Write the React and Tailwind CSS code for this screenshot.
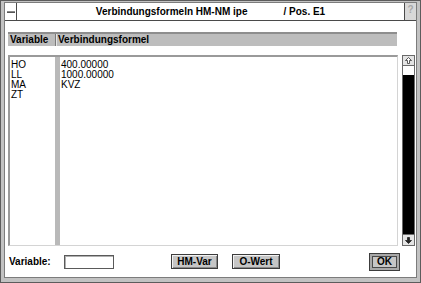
import React from 'react';

const rows = [
  ['HO', '400.00000'],
  ['LL', '1000.00000'],
  ['MA', 'KVZ'],
  ['ZT', ''],
];

const Btn = ({ children, className = '' }) => (
  <div
    className={`h-[15px] flex items-center justify-center bg-[#c6c6c6] border border-[#3c3c3c] shadow-[inset_1px_1px_0_#f2f2f2,inset_-1px_-1px_0_#8a8a8a] text-[10px] font-bold leading-none ${className}`}
  >
    {children}
  </div>
);

export default function App() {
  return (
    <div className="w-[421px] h-[283px] bg-[#5c5c5c] p-px font-['Liberation_Sans',Arial,sans-serif] text-black">
      <div className="h-full bg-[#c2c2c2] pt-px px-[3px] pb-[4px] flex">
        <div className="flex-1 border border-[#7c7c7c] bg-white flex flex-col">
          {/* Title bar */}
          <div className="h-[18px] flex border-b border-[#4a4a4a]">
            <div className="w-[12px] border-r border-[#4a4a4a] flex items-center justify-center">
              <div className="w-[8px] h-[2px] bg-[#8a8a8a] border-b border-[#555]" />
            </div>
            <div className="flex-1 text-center text-[10px] font-bold leading-[18px] whitespace-pre">
              Verbindungsformeln HM-NM ipe<span className="ml-[36px]">/ Pos. E1</span>
            </div>
            <div className="w-[12px] border-l border-[#4a4a4a] bg-[#d8d8d8] flex items-start justify-center text-[10px] leading-[14px] font-bold text-[#a8a8a8]">
              ?
            </div>
          </div>

          {/* Body */}
          <div className="flex-1 flex flex-col pl-[3px] pr-[1px]">
            {/* Header */}
            <div className="mt-[11px] mr-[18px] h-[14px] bg-[#bdbdbd] border-t-2 border-[#8e8e8e] flex text-[10px] font-bold leading-[12px]">
              <div className="w-[47px] pl-[2px]">Variable</div>
              <div className="w-px bg-[#7a7a7a]" />
              <div className="w-px bg-[#e6e6e6]" />
              <div className="pl-px">Verbindungsformel</div>
            </div>

            {/* List + scrollbar */}
            <div className="mt-[9px] h-[191px] flex">
              <div className="flex-1 flex border-t-2 border-l-2 border-[#9a9a9a] border-r border-b border-r-[#d4d4d4] border-b-[#d4d4d4]">
                <div className="w-[45px] pt-[3px] text-[10px] leading-[10px] pl-px">
                  {rows.map(([k]) => (
                    <div key={k}>{k}</div>
                  ))}
                </div>
                <div className="w-[5px] bg-[#b9b9b9]" />
                <div className="flex-1 pt-[3px] pl-px text-[10px] leading-[10px]">
                  {rows.map(([k, v]) => (
                    <div key={k} className="h-[10px]">{v}</div>
                  ))}
                </div>
              </div>

              {/* Scrollbar */}
              <div className="ml-[4px] w-[13px] flex flex-col border border-[#6a6a6a]">
                <div className="h-[10px] bg-[#e4e4e4] border-b border-[#6a6a6a] flex items-center justify-center">
                  <svg width="7" height="7" viewBox="0 0 7 7">
                    <path d="M3.5 0.5 L6.5 3.5 L4.5 3.5 L4.5 6.5 L2.5 6.5 L2.5 3.5 L0.5 3.5 Z" fill="#fff" stroke="#333" strokeWidth="0.8" />
                  </svg>
                </div>
                <div className="h-[11px] bg-white border-b-2 border-black" />
                <div className="flex-1 bg-black" />
                <div className="h-[11px] bg-[#e4e4e4] border-t border-[#6a6a6a] flex items-center justify-center">
                  <svg width="7" height="7" viewBox="0 0 7 7">
                    <path d="M3.5 6.5 L6.5 3.5 L4.5 3.5 L4.5 0.5 L2.5 0.5 L2.5 3.5 L0.5 3.5 Z" fill="#222" stroke="#222" strokeWidth="0.8" />
                  </svg>
                </div>
              </div>
            </div>

            {/* Bottom controls */}
            <div className="flex-1 flex items-center pl-[1px] pr-[15px]">
              <div className="text-[10px] font-bold w-[55px]">Variable:</div>
              <div className="w-[50px] h-[14px] border border-[#5a5a5a] shadow-[inset_1px_1px_0_#b0b0b0] bg-white" />
              <Btn className="ml-[57px] w-[47px]">HM-Var</Btn>
              <Btn className="ml-[14px] w-[48px]">O-Wert</Btn>
              <div className="ml-auto p-[2px] border border-[#3c3c3c] bg-[#a8a8a8]">
                <div className="w-[25px] h-[12px] flex items-center justify-center bg-[#c6c6c6] border border-[#4a4a4a] text-[10px] font-bold leading-none">
                  OK
                </div>
              </div>
            </div>
          </div>
        </div>
      </div>
    </div>
  );
}
